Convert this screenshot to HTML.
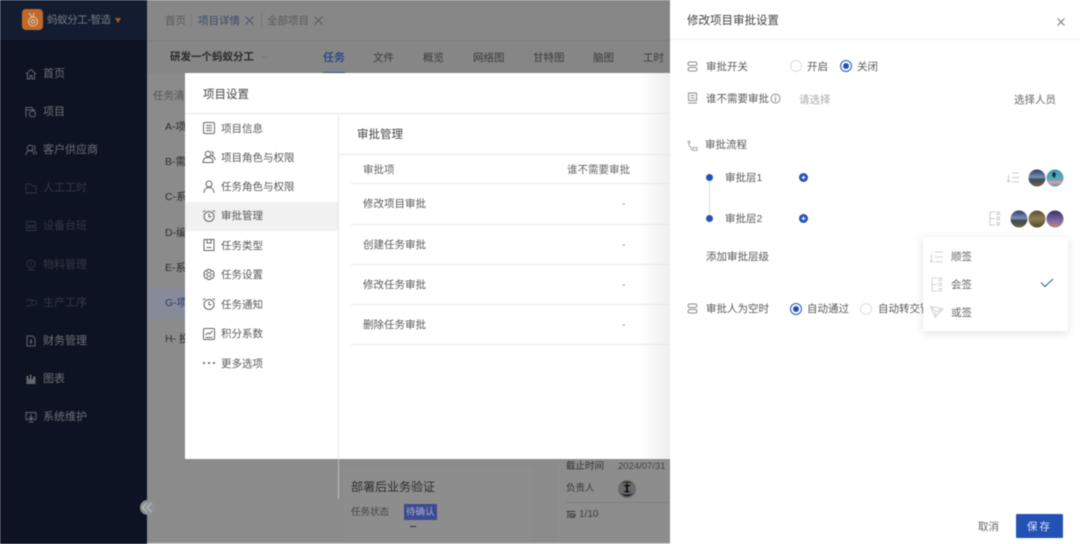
<!DOCTYPE html>
<html lang="zh"><head><meta charset="utf-8"><style>
html,body{margin:0;padding:0;background:#fff}
#p{position:relative;width:1080px;height:544px;overflow:hidden;font-family:"Liberation Sans","Noto Sans CJK SC",sans-serif;font-size:10.5px;color:#5a5a5a;filter:blur(.4px)}
#p div,#p span.t,#p svg{position:absolute}
.t{position:absolute;white-space:nowrap;line-height:14px}
.n{color:#6d7079;font-size:11px}.d{color:#343844;font-size:11px}
.g{color:#3c3c3c}.l{height:1px;background:#e6e6e6}
.ic{fill:none;stroke:#666;stroke-width:1}
.r{fill:none;stroke:#8c8c8c;stroke-width:1}
</style></head><body><div id="p">
<div style="left:147px;top:0;width:523px;height:544px;background:#8b8b8b"></div>
<div style="left:147px;top:0;width:523px;height:40px;background:#878787"></div>
<div style="left:147px;top:40px;width:523px;height:1px;background:#7d7d7d"></div>
<div style="left:147px;top:41px;width:523px;height:33px;background:#868686"></div>
<div style="left:147px;top:288px;width:40px;height:31px;background:#878b99"></div>
<div style="left:0;top:0;width:147px;height:544px;background:#0e1323"></div>
<div style="left:0;top:0;width:147px;height:40px;background:#141c31"></div>
<div style="left:22px;top:9px;width:21px;height:21px;border-radius:4px;background:#bf692b"></div>
<svg style="left:22px;top:9px" width="21" height="21" viewBox="0 0 21 21" class="ic"><circle cx="11" cy="12.5" r="4.5" stroke="#e8cdb5"/><circle cx="11" cy="12.5" r="1.8" stroke="#e8cdb5"/><path d="M7 4l3 4M12 4l-1 4" stroke="#e8cdb5"/></svg>
<span class="t" style="left:47px;top:13px;color:#777b84;font-size:10.500px;letter-spacing:-.4px">蚂蚁分工-智造</span>
<div style="left:115px;top:18px;width:0;height:0;border:3.500px solid transparent;border-top:5px solid #a65d2b;border-bottom:0"></div>

<svg style="left:25px;top:68px" width="12" height="12" viewBox="0 0 12 12" class="ic"><path d="M1 6l5-4.500 5 4.500M2.500 5v6h2.500V7.500h2V11h2.500V5" stroke="#62656d"/></svg>
<span class="t n" style="left:43px;top:67px">首页</span>
<svg style="left:25px;top:106px" width="12" height="12" viewBox="0 0 12 12" class="ic"><path d="M1 11V1.500h6L8 3.500M1 4h9.500" stroke="#62656d"/><circle cx="7.500" cy="8" r="3" stroke="#62656d"/></svg>
<span class="t n" style="left:43px;top:105px">项目</span>
<svg style="left:25px;top:144px" width="12" height="12" viewBox="0 0 12 12" class="ic"><circle cx="5" cy="4" r="2.800" stroke="#62656d"/><path d="M1 11c0-3 2-4.500 4-4.500S9 8 9 11M8.500 1.500c2 .3 2.300 4 0 4.500M9.500 7c1.300.5 2 2 2 3.500" stroke="#62656d"/></svg>
<span class="t n" style="left:43px;top:143px">客户供应商</span>
<svg style="left:25px;top:182px" width="12" height="12" viewBox="0 0 12 12" class="ic"><path d="M1 11V2h5l1 2h4v7z" stroke="#2e3240"/></svg>
<span class="t d" style="left:43px;top:181px">人工工时</span>
<svg style="left:25px;top:220px" width="12" height="12" viewBox="0 0 12 12" class="ic"><path d="M1.500 1.500h9v4h-9zM1.500 7.500h9v3h-9z" stroke="#2e3240"/></svg>
<span class="t d" style="left:43px;top:219px">设备台班</span>
<svg style="left:25px;top:259px" width="12" height="12" viewBox="0 0 12 12" class="ic"><circle cx="6" cy="5" r="4" stroke="#2e3240"/><path d="M3 11h6M6 3v4" stroke="#2e3240"/></svg>
<span class="t d" style="left:43px;top:258px">物料管理</span>
<svg style="left:25px;top:297px" width="12" height="12" viewBox="0 0 12 12" class="ic"><path d="M1 3h7M1 9h6" stroke="#2e3240"/><circle cx="9" cy="6" r="2.500" stroke="#2e3240"/></svg>
<span class="t d" style="left:43px;top:296px">生产工序</span>
<svg style="left:25px;top:335px" width="12" height="12" viewBox="0 0 12 12" class="ic"><path d="M2 1h5.500L10 3.500V11H2zM6 4v5M4.500 6.500h3" stroke="#62656d"/></svg>
<span class="t n" style="left:43px;top:334px">财务管理</span>
<svg style="left:25px;top:373px" width="12" height="12" viewBox="0 0 12 12"><path d="M1.500 11V3h2v3h1.500V1.500h1.500V6h1.500V3.500h2.500V11z" fill="#62656d"/></svg>
<span class="t n" style="left:43px;top:372px">图表</span>
<svg style="left:25px;top:411px" width="12" height="12" viewBox="0 0 12 12" class="ic"><path d="M1 1.500h10v7H1zM6 3v7M4 6l2 2 2-2M3.500 11h5" stroke="#62656d"/></svg>
<span class="t n" style="left:43px;top:410px">系统维护</span>

<div style="left:140px;top:500px;width:15px;height:15px;border-radius:50%;background:#8f9094"></div>
<svg style="left:140px;top:500px" width="15" height="15" viewBox="0 0 15 15" class="ic"><path d="M7 3l-4.500 4.500L7 12M11.500 3L7 7.500l4.500 4.500" stroke="#c8c8c8"/></svg>

<span class="t" style="left:165px;top:14px;color:#5a5a5a;font-size:10.5px">首页</span>
<div style="left:191px;top:13px;width:1px;height:14px;background:#7b7b7b"></div>
<span class="t" style="left:198px;top:14px;color:#3f4a6d;font-size:10.5px">项目详情</span>
<svg style="left:245px;top:16px" width="9" height="9" viewBox="0 0 9 9" class="ic"><path d="M.5.500l8 8M8.500.500l-8 8" stroke="#4a5473"/></svg>
<div style="left:261px;top:13px;width:1px;height:14px;background:#7b7b7b"></div>
<span class="t" style="left:267px;top:14px;color:#5a5a5a;font-size:10.5px">全部项目</span>
<svg style="left:314px;top:16px" width="9" height="9" viewBox="0 0 9 9" class="ic"><path d="M.5.500l8 8M8.500.500l-8 8" stroke="#5a5a5a"/></svg>

<span class="t" style="left:170px;top:50px;color:#2b2b2b;font-size:10.500px;font-weight:700">研发一个蚂蚁分工</span>
<svg style="left:261px;top:54px" width="8" height="6" viewBox="0 0 8 6" class="ic"><path d="M1 1.500l3 3 3-3" stroke="#767676"/></svg>
<span class="t" style="left:323px;top:51px;color:#2c4a86;font-size:11px;font-weight:700">任务</span>
<div style="left:323px;top:72px;width:22px;height:2px;background:#2c4a86"></div>
<span class="t g" style="left:373px;top:51px;font-size:10.500px">文件</span>
<span class="t g" style="left:423px;top:51px;font-size:10.500px">概览</span>
<span class="t g" style="left:473px;top:51px;font-size:10.500px">网络图</span>
<span class="t g" style="left:533px;top:51px;font-size:10.500px">甘特图</span>
<span class="t g" style="left:593px;top:51px;font-size:10.500px">脑图</span>
<span class="t g" style="left:643px;top:51px;font-size:10.500px">工时</span>

<span class="t" style="left:153px;top:89px;color:#555;font-size:10.500px">任务清单</span>
<span class="t" style="left:165px;top:120px;color:#2c2c2c">A-项目</span>
<span class="t" style="left:165px;top:155px;color:#2c2c2c">B-需求</span>
<span class="t" style="left:165px;top:190px;color:#2c2c2c">C-系统</span>
<span class="t" style="left:165px;top:226px;color:#2c2c2c">D-编码</span>
<span class="t" style="left:165px;top:261px;color:#2c2c2c">E-系统</span>
<span class="t" style="left:165px;top:296px;color:#2f3b70">G-项目</span>
<span class="t" style="left:165px;top:332px;color:#2c2c2c">H- 投产</span>

<div style="left:343px;top:468px;width:190px;height:76px;background:#8d8d8d"></div>
<div style="left:558px;top:459px;width:112px;height:85px;background:#8d8d8d"></div>
<div style="left:338px;top:459px;width:1px;height:40px;background:#bdbdbd"></div>
<div style="left:147px;top:543px;width:523px;height:1px;background:#c9c9c9"></div>
<span class="t" style="left:351px;top:480px;color:#2d2d2d;font-size:12px">部署后业务验证</span>
<span class="t" style="left:351px;top:506px;color:#444;font-size:9.500px">任务状态</span>
<div style="left:404px;top:504px;width:33px;height:16px;background:#3d4a90"></div>
<span class="t" style="left:406px;top:506px;color:#a9aed0;font-size:9.500px">待确认</span>
<div style="left:410px;top:526px;width:6px;height:1px;background:#333"></div>
<span class="t" style="left:566px;top:460px;color:#333;font-size:9.500px">截止时间</span>
<span class="t" style="left:618px;top:460px;color:#444;font-size:9.500px">2024/07/31</span>
<span class="t" style="left:566px;top:482px;color:#3a3a3a;font-size:9.500px">负责人</span>
<div style="left:618px;top:480px;width:18px;height:18px;border-radius:50%;background:#6a6a6a"></div>
<svg style="left:618px;top:480px" width="18" height="18" viewBox="0 0 18 18"><path d="M9 2l1 3h3l-3 2v4h3l-4 2-4-2h3V7L5 5h3z" fill="#141414"/><path d="M3 13c3 4.500 9 4.500 12 0-3 2-9 2-12 0z" fill="#1c1f33"/><path d="M4 3.500C6 .8 12 .8 14 3.500 12 2.500 6 2.500 4 3.500z" fill="#222"/></svg>
<div style="left:566px;top:502px;width:104px;height:1px;background:#7f7f7f"></div>
<svg style="left:566px;top:510px" width="10" height="10" viewBox="0 0 10 10" class="ic"><path d="M.5 1.500h9M2 1.500v7M4 4h5v2H4zM4 7.500h5" stroke="#3c3c3c"/></svg>
<span class="t" style="left:579px;top:508px;color:#3c3c3c;font-size:10px">1/10</span>

<div style="left:185px;top:73px;width:485px;height:386px;background:#fff"></div>
<div style="left:640px;top:73px;width:30px;height:386px;background:linear-gradient(90deg,#fff,#eee)"></div>
<span class="t" style="left:203px;top:88px;color:#444;font-size:11.500px">项目设置</span>
<div class="l" style="left:185px;top:113px;width:485px"></div>
<div style="left:338px;top:113px;width:1px;height:346px;background:#e6e6e6"></div>
<div style="left:185px;top:202px;width:153px;height:29px;background:#f1f1f2"></div>

<svg style="left:202px;top:121px" width="14" height="14" viewBox="0 0 14 14" class="ic"><rect x="1.500" y="1.500" width="11" height="11" rx="1.500"/><path d="M4 4.500h6M4 7h6M4 9.500h6"/></svg>
<span class="t" style="left:221px;top:122px">项目信息</span>
<svg style="left:202px;top:150px" width="14" height="14" viewBox="0 0 14 14" class="ic"><circle cx="6" cy="4" r="2.800"/><path d="M1 12.500c0-3.500 2-5 5-5s5 1.500 5 5zM9.500 1.500c2 .5 2.300 3.500.3 4.500 2 .5 3.200 2 3.200 4"/></svg>
<span class="t" style="left:221px;top:151px">项目角色与权限</span>
<svg style="left:202px;top:180px" width="14" height="14" viewBox="0 0 14 14" class="ic"><circle cx="7" cy="4" r="3"/><path d="M2 13c0-3.500 2-5.500 5-5.500s5 2 5 5.500"/></svg>
<span class="t" style="left:221px;top:180px">任务角色与权限</span>
<svg style="left:202px;top:209px" width="14" height="14" viewBox="0 0 14 14" class="ic"><circle cx="7" cy="7.500" r="5"/><path d="M7 4.500v3.300h2.500M1 3l2-1.800M13 3l-2-1.800"/></svg>
<span class="t" style="left:221px;top:209px">审批管理</span>
<svg style="left:202px;top:238px" width="14" height="14" viewBox="0 0 14 14" class="ic"><path d="M2 1.500h10v11H2zM5 1.500v3.500h4V1.500M4.500 9.500h5"/></svg>
<span class="t" style="left:221px;top:239px">任务类型</span>
<svg style="left:202px;top:268px" width="14" height="14" viewBox="0 0 14 14" class="ic"><path d="M5.500 1.500h3l.5 1.700 1.700-.5 1.500 2.600-1.200 1.200 1.200 1.200-1.500 2.600-1.700-.5-.5 1.700h-3l-.5-1.700-1.700.5L1.800 7.700 3 6.500 1.800 5.300l1.500-2.600 1.700.5z"/><circle cx="7" cy="6.500" r="2"/></svg>
<span class="t" style="left:221px;top:268px">任务设置</span>
<svg style="left:202px;top:297px" width="14" height="14" viewBox="0 0 14 14" class="ic"><circle cx="7" cy="7.500" r="5"/><path d="M7 4.500v3.300h2.500M1 3l2-1.800M13 3l-2-1.800"/></svg>
<span class="t" style="left:221px;top:298px">任务通知</span>
<svg style="left:202px;top:327px" width="14" height="14" viewBox="0 0 14 14" class="ic"><rect x="1.500" y="1.500" width="11" height="11" rx="1"/><path d="M3.500 8l2.500-2 1.500 1 3-3M3.500 10.500h7"/></svg>
<span class="t" style="left:221px;top:327px">积分系数</span>
<svg style="left:202px;top:360px" width="14" height="6" viewBox="0 0 14 6"><circle cx="2" cy="3" r="1" fill="#555"/><circle cx="7" cy="3" r="1" fill="#555"/><circle cx="12" cy="3" r="1" fill="#555"/></svg>
<span class="t" style="left:221px;top:357px">更多选项</span>

<span class="t" style="left:357px;top:128px;color:#444;font-size:11.500px">审批管理</span>
<div class="l" style="left:338px;top:154px;width:332px"></div>
<span class="t" style="left:363px;top:163px;color:#666">审批项</span>
<span class="t" style="left:567px;top:163px;color:#666">谁不需要审批</span>
<div class="l" style="left:351px;top:183px;width:319px"></div>
<span class="t" style="left:363px;top:197px">修改项目审批</span><span class="t" style="left:622px;top:197px;color:#888">-</span>
<div class="l" style="left:351px;top:224px;width:319px"></div>
<span class="t" style="left:363px;top:238px">创建任务审批</span><span class="t" style="left:622px;top:238px;color:#888">-</span>
<div class="l" style="left:351px;top:264px;width:319px"></div>
<span class="t" style="left:363px;top:278px">修改任务审批</span><span class="t" style="left:622px;top:278px;color:#888">-</span>
<div class="l" style="left:351px;top:304px;width:319px"></div>
<span class="t" style="left:363px;top:318px">删除任务审批</span><span class="t" style="left:622px;top:318px;color:#888">-</span>
<div class="l" style="left:351px;top:344px;width:319px"></div>

<div style="left:670px;top:0;width:410px;height:544px;background:#fff"></div>
<span class="t" style="left:687px;top:14px;color:#444;font-size:11.500px">修改项目审批设置</span>
<svg style="left:1057px;top:18px" width="8" height="8" viewBox="0 0 8 8" class="ic"><path d="M.5.500l7 7M7.500.500l-7 7" stroke="#777"/></svg>
<div class="l" style="left:670px;top:39px;width:410px;background:#f0f0f0"></div>

<svg style="left:687px;top:61px" width="11" height="11" viewBox="0 0 11 11" class="r"><rect x="1" y="1" width="9" height="3.500" rx="1.700"/><rect x="1" y="6.500" width="9" height="3.500" rx="1.700"/></svg>
<span class="t" style="left:706px;top:60px">审批开关</span>
<div style="left:790px;top:60px;width:10px;height:10px;border:1px solid #ddd;border-radius:50%"></div>
<span class="t" style="left:807px;top:60px">开启</span>
<div style="left:840px;top:60px;width:10px;height:10px;border:1px solid #2a55b5;border-radius:50%"></div>
<div style="left:843px;top:63px;width:6px;height:6px;background:#2352b4;border-radius:50%"></div>
<span class="t" style="left:857px;top:60px">关闭</span>

<svg style="left:687px;top:92px" width="11" height="12" viewBox="0 0 11 12" class="r"><path d="M1.500 1h8v7.500h-8zM3.500 3.500h4M3.500 6h4M1 11h9"/></svg>
<span class="t" style="left:706px;top:92px">谁不需要审批</span>
<svg style="left:770px;top:93px" width="11" height="11" viewBox="0 0 11 11" class="r"><circle cx="5.500" cy="5.500" r="4.500"/><path d="M5.500 4.500v4M5.500 2.500v1"/></svg>
<span class="t" style="left:799px;top:93px;color:#aaa">请选择</span>
<span class="t" style="left:1014px;top:93px;color:#666">选择人员</span>

<svg style="left:687px;top:140px" width="11" height="12" viewBox="0 0 11 12" class="ic"><circle cx="2" cy="2" r="1" stroke="#aaa"/><path d="M2 3.500v2l2 2v2h1" stroke="#aaa"/><rect x="6" y="7.500" width="4" height="3" stroke="#aaa"/></svg>
<span class="t" style="left:705px;top:138px">审批流程</span>

<div style="left:706px;top:174px;width:7px;height:7px;border-radius:50%;background:#2352b4"></div>
<div style="left:709px;top:181px;width:1px;height:34px;background:#ddd"></div>
<span class="t" style="left:725px;top:171px">审批层1</span>
<svg style="left:799px;top:173px" width="9" height="9" viewBox="0 0 9 9"><circle cx="4.500" cy="4.500" r="4.500" fill="#2352b4"/><path d="M4.500 2.500v4M2.500 4.500h4" stroke="#fff" stroke-width="1"/></svg>
<svg style="left:1006px;top:171px" width="14" height="13" viewBox="0 0 14 13" class="ic"><path d="M6 2h7M6 6.500h7M6 11h7M2.500 4v7M1 9.500l1.500 1.500 1.500-1.500" stroke="#ccc"/></svg>
<svg style="left:1028px;top:169px" width="36" height="18" viewBox="0 0 36 18"><defs><linearGradient id="a" x1="0" y1="0" x2="0" y2="1"><stop offset="0" stop-color="#2a3a6a"/><stop offset=".45" stop-color="#7d8fb0"/><stop offset=".6" stop-color="#3c4a4e"/><stop offset="1" stop-color="#6e6450"/></linearGradient><linearGradient id="b" x1="0" y1="0" x2="0" y2="1"><stop offset="0" stop-color="#3f9ab5"/><stop offset=".6" stop-color="#5fa9b6"/><stop offset=".75" stop-color="#e49aa6"/><stop offset="1" stop-color="#43a0b0"/></linearGradient><linearGradient id="c" x1="0" y1="0" x2="0" y2="1"><stop offset="0" stop-color="#5a4f38"/><stop offset=".5" stop-color="#8f7d50"/><stop offset="1" stop-color="#4a4632"/></linearGradient><linearGradient id="d" x1="0" y1="0" x2="0" y2="1"><stop offset="0" stop-color="#37305f"/><stop offset=".6" stop-color="#7b68a8"/><stop offset="1" stop-color="#d0806e"/></linearGradient></defs><circle cx="9" cy="9" r="8.500" fill="url(#a)"/><circle cx="27" cy="9" r="8.500" fill="url(#b)"/><path d="M25 3l3 1-1 5-3-2z" fill="#1d2a3f"/></svg>

<div style="left:706px;top:215px;width:7px;height:7px;border-radius:50%;background:#2352b4"></div>
<span class="t" style="left:725px;top:212px">审批层2</span>
<svg style="left:799px;top:214px" width="9" height="9" viewBox="0 0 9 9"><circle cx="4.500" cy="4.500" r="4.500" fill="#2352b4"/><path d="M4.500 2.500v4M2.500 4.500h4" stroke="#fff" stroke-width="1"/></svg>
<svg style="left:989px;top:211px" width="12" height="15" viewBox="0 0 12 15" class="ic"><path d="M1 1h5M1 1v13h5M1 7.500h5" stroke="#ccc"/><rect x="8" y="1" width="2.500" height="2.500" stroke="#ccc"/><rect x="8" y="6.200" width="2.500" height="2.500" stroke="#ccc"/><rect x="8" y="11.500" width="2.500" height="2.500" stroke="#ccc"/></svg>
<svg style="left:1010px;top:210px" width="54" height="18" viewBox="0 0 54 18"><circle cx="9" cy="9" r="8.500" fill="url(#a)"/><circle cx="27" cy="9" r="8.500" fill="url(#c)"/><circle cx="45" cy="9" r="8.500" fill="url(#d)"/></svg>

<span class="t" style="left:706px;top:250px">添加审批层级</span>

<svg style="left:687px;top:303px" width="11" height="11" viewBox="0 0 11 11" class="r"><rect x="1" y="1" width="9" height="3.500" rx="1.700"/><rect x="1" y="6.500" width="9" height="3.500" rx="1.700"/></svg>
<span class="t" style="left:706px;top:302px">审批人为空时</span>
<div style="left:790px;top:303px;width:10px;height:10px;border:1px solid #2a55b5;border-radius:50%"></div>
<div style="left:793px;top:306px;width:6px;height:6px;background:#2352b4;border-radius:50%"></div>
<span class="t" style="left:807px;top:302px">自动通过</span>
<div style="left:860px;top:303px;width:10px;height:10px;border:1px solid #ddd;border-radius:50%"></div>
<span class="t" style="left:878px;top:302px">自动转交管理员</span>

<div style="left:923px;top:237px;width:145px;height:94px;background:#fff;box-shadow:0 2px 9px rgba(0,0,0,.13)"></div>
<svg style="left:929px;top:250px" width="15" height="14" viewBox="0 0 15 14" class="ic"><path d="M6 2h8M6 7h8M6 12h8M2.500 4v8M1 10.500L2.500 12 4 10.500" stroke="#d4d4d4"/></svg>
<span class="t" style="left:951px;top:250px;color:#666;font-size:10.500px">顺签</span>
<svg style="left:931px;top:277px" width="12" height="15" viewBox="0 0 12 15" class="ic"><path d="M1 1h5M1 1v13h5M1 7.500h5" stroke="#d4d4d4"/><rect x="8" y="1" width="2.500" height="2.500" stroke="#d4d4d4"/><rect x="8" y="6.200" width="2.500" height="2.500" stroke="#d4d4d4"/><rect x="8" y="11.500" width="2.500" height="2.500" stroke="#d4d4d4"/></svg>
<span class="t" style="left:951px;top:278px;color:#666;font-size:10.500px">会签</span>
<svg style="left:1040px;top:278px" width="14" height="10" viewBox="0 0 14 10" class="ic"><path d="M1 4.500l4 4 8-7.500" stroke="#2c5aa8"/></svg>
<svg style="left:929px;top:305px" width="15" height="14" viewBox="0 0 15 14" class="ic"><path d="M1.500 1.500L14 4 6 12.500zM1.500 1.500L7 7l7-3M7 7l-1 5.500" stroke="#d4d4d4"/></svg>
<span class="t" style="left:951px;top:306px;color:#666;font-size:10.500px">或签</span>

<span class="t" style="left:978px;top:520px;color:#666;font-size:10.500px">取消</span>
<div style="left:1016px;top:514px;width:47px;height:24px;background:#2352b4;border-radius:1px"></div>
<span class="t" style="left:1016px;top:520px;width:47px;text-align:center;color:#dfe6f5;font-size:10.500px;letter-spacing:2px">保存</span>
</div></body></html>
